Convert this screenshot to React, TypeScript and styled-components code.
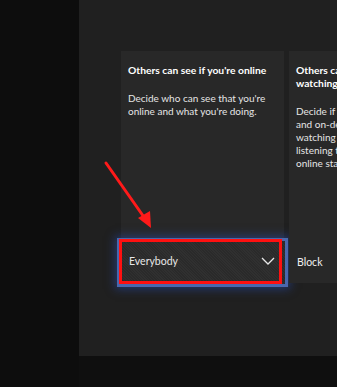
import styled, { createGlobalStyle } from "styled-components";

const GlobalStyle = createGlobalStyle`
  html, body {
    margin: 0;
    padding: 0;
    background: #0e0e0e;
    overflow: hidden;
  }
  body {
    font-family: Lato, "Noto Sans", Arial, sans-serif;
  }
`;

const Page = styled.div`
  position: relative;
  display: flex;
  width: 337px;
  height: 387px;
  background: #0f0f0f;
  overflow: hidden;
`;

const Sidebar = styled.div`
  width: 79px;
  flex-shrink: 0;
  background: #0d0d0d;
`;

const Main = styled.div`
  flex: 1;
  display: flex;
  flex-direction: column;
`;

const Panel = styled.div`
  height: 356px;
  box-sizing: border-box;
  padding: 51px 0 0 42px;
  background: #202020;
`;

const CardRow = styled.div`
  display: flex;
  gap: 5px;
`;

const Card = styled.div`
  position: relative;
  flex-shrink: 0;
  width: 163px;
  height: 232px;
  box-sizing: border-box;
  padding: 13px 0 0 7px;
  display: flex;
  flex-direction: column;
  background: #282828;
`;

const Title = styled.div`
  font-size: 10.3px;
  line-height: 13px;
  font-weight: 700;
  color: #ffffff;
  padding-right: 8px;
`;

const Body = styled.div`
  margin-top: 15px;
  font-size: 10px;
  line-height: 13px;
  color: #e6e6e6;
  padding-right: 8px;
  white-space: nowrap;
`;

const Footer = styled.div`
  margin-top: auto;
  height: 42px;
  display: flex;
  align-items: center;
  font-size: 10.5px;
  color: #f0f0f0;
  padding-left: 1px;
`;

const Dropdown = styled.div`
  position: relative;
  margin: auto -4px -4px -11px;
  height: 49px;
  box-sizing: border-box;
  border: 3px solid #4a67ad;
  box-shadow: 0 0 9px 2px rgba(40, 80, 190, 0.5);
  background: repeating-linear-gradient(
      45deg,
      #2a2a2a 0px,
      #2a2a2a 1px,
      #303030 1px,
      #303030 2px
    );
  display: flex;
  align-items: center;
  justify-content: space-between;
  padding: 0 10px 0 9px;
  font-size: 10.5px;
  color: #e8e8e8;
`;

const Label = styled.span`
  margin-top: -3px;
`;

const Chevron = styled.svg`
  margin-top: -3px;
`;

const Highlight = styled.div`
  position: absolute;
  left: -1px;
  top: -2px;
  right: 3px;
  bottom: 0px;
  border: 3px solid #ff1010;
  pointer-events: none;
`;

const Arrow = styled.svg`
  position: absolute;
  left: 100px;
  top: 158px;
  pointer-events: none;
`;

export default function App() {
  return (
    <Page>
      <GlobalStyle />
      <Sidebar />
      <Main>
        <Panel>
          <CardRow>
            <Card>
              <Title>Others can see if you're online</Title>
              <Body>
                Decide who can see that you're
                <br />
                online and what you're doing.
              </Body>
              <Dropdown>
                <Label>Everybody</Label>
                <Chevron width="14" height="8" viewBox="0 0 14 8">
                  <path d="M1 1 L7 7 L13 1" fill="none" stroke="#e8e8e8" strokeWidth="1.3" />
                </Chevron>
                <Highlight />
              </Dropdown>
            </Card>
            <Card>
              <Title>
                Others can see if you're
                <br />
                watching or listening
              </Title>
              <Body>
                Decide if others can see the live TV
                <br />
                and on-demand content you're
                <br />
                watching and the music you're
                <br />
                listening to as part of your
                <br />
                online status.
              </Body>
              <Footer>Block</Footer>
            </Card>
          </CardRow>
        </Panel>
      </Main>
      <Arrow width="60" height="80" viewBox="0 0 60 80">
        <line x1="6" y1="5" x2="46" y2="62" stroke="#ff1a1a" strokeWidth="3" strokeLinecap="round" />
        <polygon points="51,70 38,60 50,53" fill="#ff1a1a" />
      </Arrow>
    </Page>
  );
}
